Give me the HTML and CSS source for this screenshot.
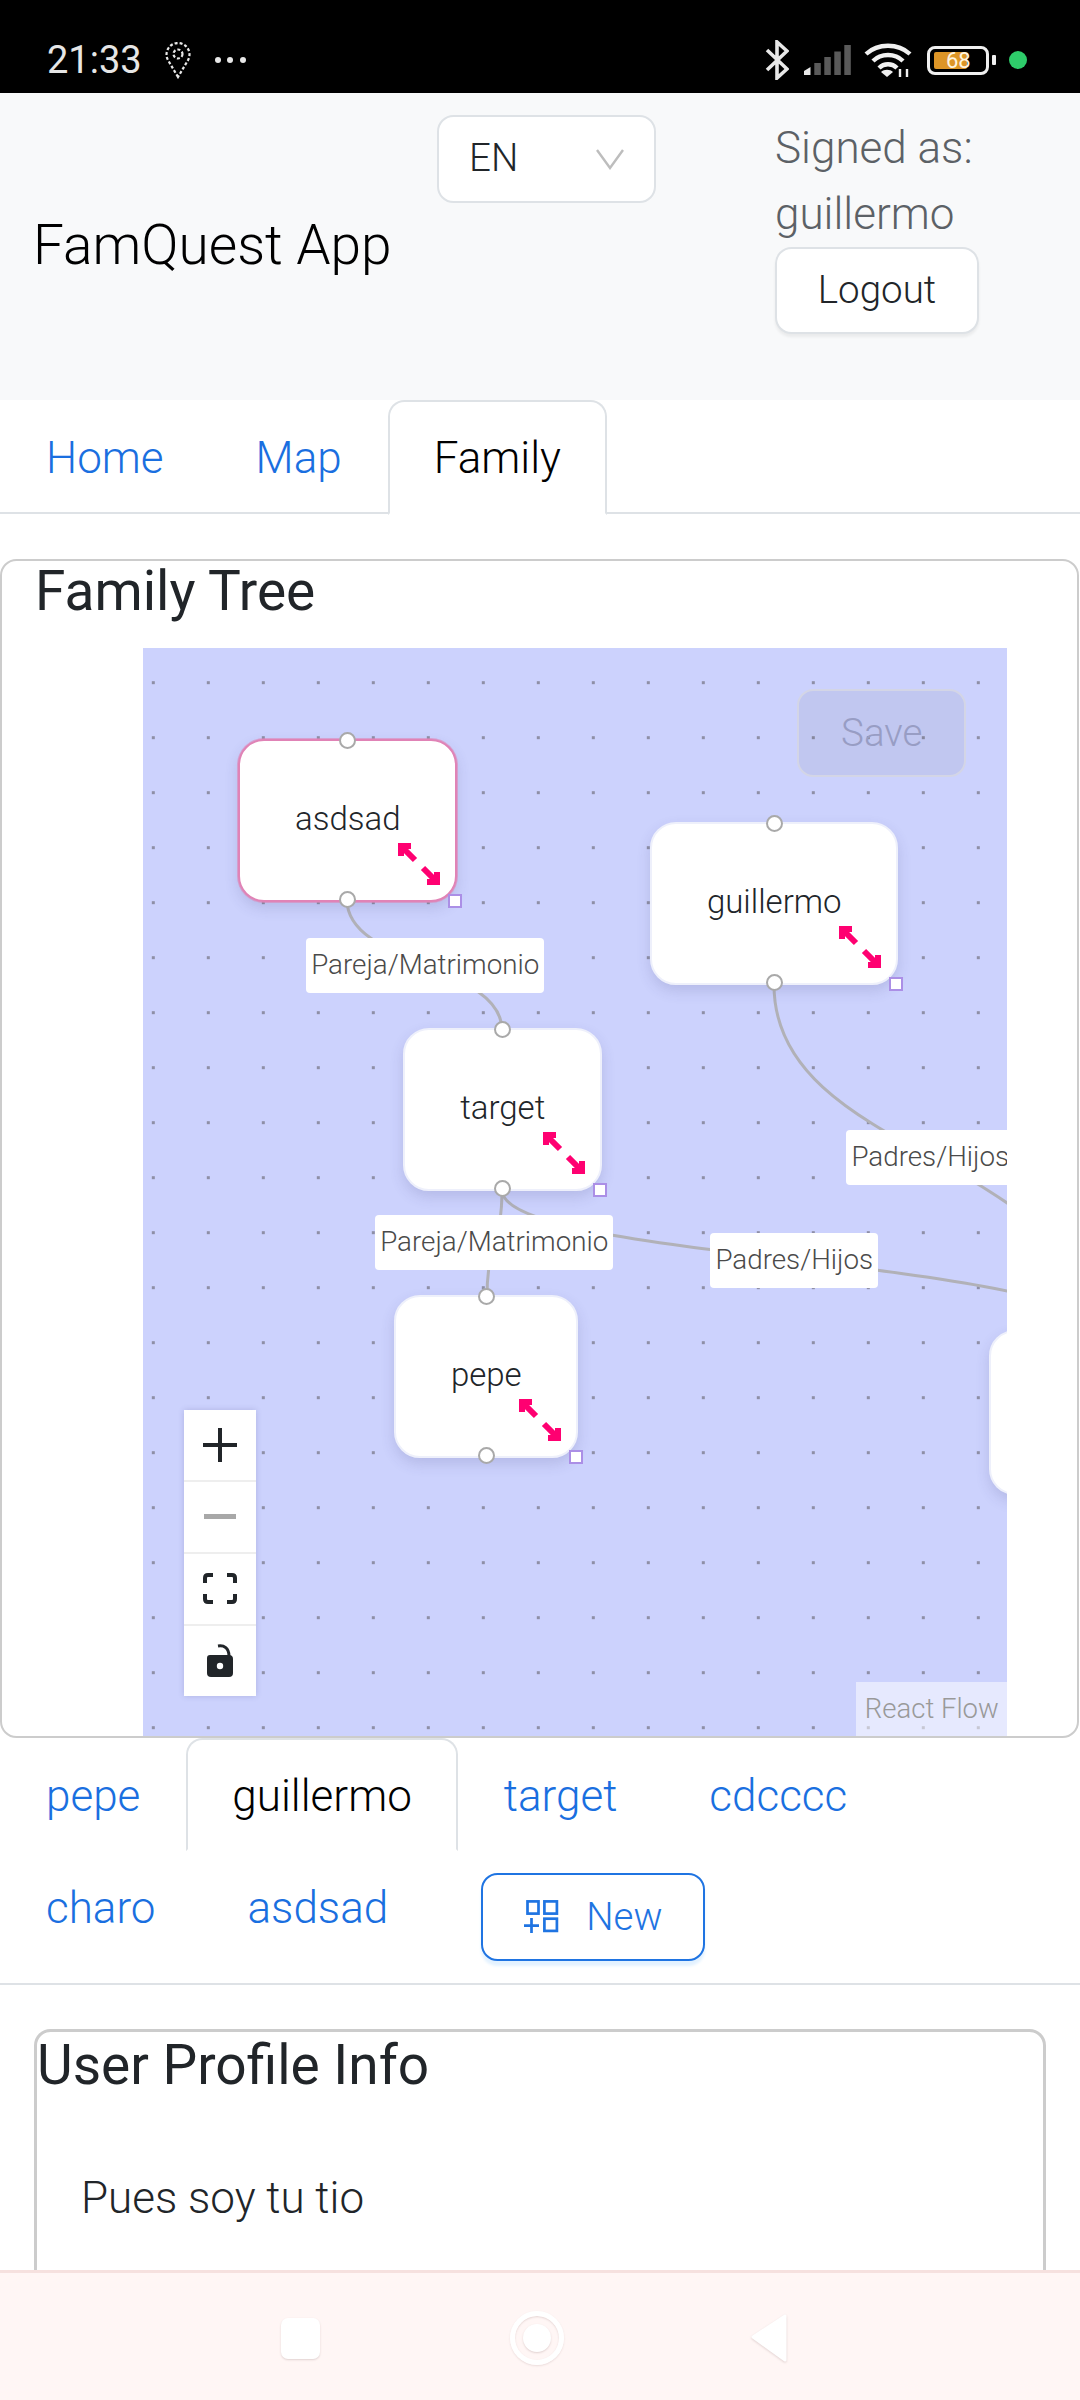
FILE: index.html
```html
<!DOCTYPE html>
<html lang="en">

<head>
     <meta charset="UTF-8">
     <meta name="viewport" content="width=device-width, initial-scale=1.0">
     <title>FamQuest App</title>
     <link rel="stylesheet" href="styles.css">
</head>

<body>
     <div class="screen">

          <div class="statusbar">
               <span class="clock">21:33</span>
               <svg class="pin" width="26" height="37" viewBox="0 0 26 37" fill="none" stroke="#e8e8e8" stroke-width="2.2" stroke-dasharray="3 2">
                    <path d="M13 35 L3.5 19 A11.5 11.5 0 1 1 22.5 19 Z" />
                    <circle cx="13" cy="12" r="4.5" />
               </svg>
               <span class="more">
                    <i></i><i></i><i></i>
               </span>
               <span class="spacer"></span>
               <svg class="bt" width="24" height="40" viewBox="0 0 24 40" fill="none" stroke="#e8e8e8" stroke-width="3.6">
                    <path d="M2 10 L22 29 L12 38 V2 L22 11 L2 30" />
               </svg>
               <svg class="signal" width="47" height="30" viewBox="0 0 47 30" fill="#5a5a5a">
                    <path d="M0 26 L6.5 22 V30 H0 Z" fill="#e8e8e8" />
                    <rect x="10.3" y="18" width="6.5" height="12" />
                    <rect x="20.3" y="12" width="6.5" height="18" />
                    <rect x="30.3" y="6.5" width="6.5" height="23.5" />
                    <rect x="40.3" y="0" width="6.5" height="30" />
               </svg>
               <svg class="wifi" width="48" height="34" viewBox="0 0 48 34" fill="none" stroke="#f0f0f0" stroke-width="4.4">
                    <path d="M2 11 C14 0 34 0 46 11" />
                    <path d="M9 18 C17 10 31 10 39 18" />
                    <path d="M15 25 C20 20 28 20 33 25" />
                    <path d="M17 29 L23 34 L29 29 C26 26 20 26 17 29 Z" fill="#f0f0f0" stroke="none" />
                    <path d="M36 34 V26 M43 34 V26" stroke-width="2.4" />
               </svg>
               <div class="battery">
                    <div class="battery-fill">68</div>
               </div>
               <div class="battery-cap"></div>
               <div class="green-dot"></div>
          </div>

          <div class="topbar">
               <div class="brand">FamQuest App</div>
               <div class="lang">
                    <span>EN</span>
                    <svg width="30" height="22" viewBox="0 0 30 22" fill="none" stroke="#bdbdbd" stroke-width="2.4">
                         <path d="M2 2 L15 20 L28 2" />
                    </svg>
               </div>
               <div class="user">
                    <div class="user-name">Signed as:<br>guillermo</div>
                    <button class="logout">Logout</button>
               </div>
          </div>

          <div class="tabs">
               <a class="tab">Home</a>
               <a class="tab">Map</a>
               <a class="tab active">Family</a>
          </div>

          <div class="card tree-card">
               <h2 class="tree-title">Family Tree</h2>

               <div class="flow">
                    <svg class="edges" width="864" height="1089" viewBox="143 648 864 1089" fill="none" stroke="#b1b1b7" stroke-width="3">
                         <path d="M347 900 C347 965 502 965 502 1030" />
                         <path d="M502 1190 C502 1243 487 1243 487 1297" />
                         <path d="M502 1190 C502 1260 1086 1260 1086 1330" />
                         <path d="M774 985 C774 1157 1086 1157 1086 1329" />
                    </svg>

                    <div class="edge-label label-pareja-1">Pareja/Matrimonio</div>
                    <div class="edge-label label-pareja-2">Pareja/Matrimonio</div>
                    <div class="edge-label label-padres-1">Padres/Hijos</div>
                    <div class="edge-label label-padres-2">Padres/Hijos</div>

                    <div class="node node-asdsad selected">
                         asdsad
                         <span class="handle top"></span>
                         <span class="handle bottom"></span>
                         <span class="resize"></span>
                         <svg class="resize-icon" width="42" height="42" viewBox="0 0 42 42">
                              <path d="M17 17 L3 3 M3 13 V3 H13 M25 25 L39 39 M39 29 V39 H29" />
                         </svg>
                    </div>

                    <div class="node node-guillermo">
                         guillermo
                         <span class="handle top"></span>
                         <span class="handle bottom"></span>
                         <span class="resize"></span>
                         <svg class="resize-icon" width="42" height="42" viewBox="0 0 42 42">
                              <path d="M17 17 L3 3 M3 13 V3 H13 M25 25 L39 39 M39 29 V39 H29" />
                         </svg>
                    </div>

                    <div class="node node-target">
                         target
                         <span class="handle top"></span>
                         <span class="handle bottom"></span>
                         <span class="resize"></span>
                         <svg class="resize-icon" width="42" height="42" viewBox="0 0 42 42">
                              <path d="M17 17 L3 3 M3 13 V3 H13 M25 25 L39 39 M39 29 V39 H29" />
                         </svg>
                    </div>

                    <div class="node node-pepe">
                         pepe
                         <span class="handle top"></span>
                         <span class="handle bottom"></span>
                         <span class="resize"></span>
                         <svg class="resize-icon" width="42" height="42" viewBox="0 0 42 42">
                              <path d="M17 17 L3 3 M3 13 V3 H13 M25 25 L39 39 M39 29 V39 H29" />
                         </svg>
                    </div>

                    <div class="node node-cut"></div>

                    <button class="save">Save</button>

                    <div class="controls">
                         <div class="control">
                              <svg width="34" height="34" viewBox="0 0 34 34" fill="#212529">
                                   <rect x="15" y="0" width="4" height="34" />
                                   <rect x="0" y="15" width="34" height="4" />
                              </svg>
                         </div>
                         <div class="control">
                              <svg width="32" height="5" viewBox="0 0 32 5" fill="#a8a8a8">
                                   <rect width="32" height="5" />
                              </svg>
                         </div>
                         <div class="control">
                              <svg width="34" height="31" viewBox="0 0 34 31" fill="none" stroke="#212529" stroke-width="4">
                                   <path d="M2 10 V5 Q2 2 5 2 H10 M24 2 H29 Q32 2 32 5 V10 M32 21 V26 Q32 29 29 29 H24 M10 29 H5 Q2 29 2 26 V21" />
                              </svg>
                         </div>
                         <div class="control">
                              <svg width="28" height="34" viewBox="0 0 28 34">
                                   <path d="M12 2 C18 1 23 4 23 12" fill="none" stroke="#212529" stroke-width="3" />
                                   <path d="M4 11 H23 Q27 11 27 15 V29 Q27 33 23 33 H5 Q1 33 1 29 V14 Q1 11 4 11 Z" fill="#212529" />
                                   <circle cx="14" cy="22" r="3.2" fill="#fff" />
                              </svg>
                         </div>
                    </div>

                    <div class="attribution">React Flow</div>
               </div>
          </div>

          <div class="tabs member-tabs">
               <a class="tab">pepe</a>
               <a class="tab active">guillermo</a>
               <a class="tab">target</a>
               <a class="tab">cdcccc</a>
               <a class="tab">charo</a>
               <a class="tab">asdsad</a>
               <button class="new-btn">
                    <svg width="35" height="33" viewBox="0 0 35 33" fill="none" stroke="#1f74e2" stroke-width="2.7">
                         <rect x="3.5" y="1.4" width="11" height="12.2" />
                         <rect x="20.4" y="1.4" width="12.5" height="12.2" />
                         <rect x="20.4" y="18.7" width="12.5" height="12.2" />
                         <path d="M0 25.7 H15 M7.5 18 V33" />
                    </svg>
                    New
               </button>
          </div>

          <div class="card profile-card">
               <h2 class="profile-title">User Profile Info</h2>
               <p class="profile-text">Pues soy tu tio</p>
          </div>

          <div class="navbar">
               <div class="nav-square"></div>
               <div class="nav-circle">
                    <div class="nav-dot"></div>
               </div>
               <svg class="nav-back" width="38" height="50" viewBox="0 0 38 50">
                    <path d="M35 3 V47 L3 24 Z" fill="#fff" stroke="#fff" stroke-width="3" stroke-linejoin="round" />
               </svg>
          </div>

     </div>
</body>

</html>
```
FILE: styles.css
```css
* {
     box-sizing: border-box;
}

body {
     margin: 0;
     font-family: Roboto, "Noto Sans", sans-serif;
     font-weight: 300;
     font-size: 44px;
     color: #212529;
     background: #fff;
}

.screen {
     position: relative;
     height: 2400px;
     overflow: hidden;
}

/* status bar */

.statusbar {
     height: 93px;
     background: #000;
     color: #e6e6e6;
     display: flex;
     align-items: center;
     padding: 27px 53px 0 47px;
}

.clock {
     font-size: 38px;
     font-weight: 400;
     width: 118px;
}

.pin {
     margin-right: 24px;
}

.more {
     display: flex;
     gap: 6.4px;
}

.more i {
     width: 6px;
     height: 6px;
     border-radius: 50%;
     background: #e8e8e8;
}

.spacer {
     flex: 1;
}

.bt {
     margin-right: 15px;
}

.signal {
     margin-right: 13px;
}

.wifi {
     margin-right: 15px;
}

.battery {
     width: 62px;
     height: 29px;
     border: 3px solid #f0f0f0;
     border-radius: 8px;
     padding: 3px 4px;
     position: relative;
}

.battery-fill {
     width: 33px;
     height: 17px;
     background: #dd9527;
     color: #fff5e0;
     font-size: 22px;
     line-height: 17px;
     font-weight: 400;
     padding-left: 12px;
     white-space: nowrap;
     border-radius: 2px;
}

.battery-cap {
     width: 4px;
     height: 10px;
     margin-left: 3px;
     background: #f0f0f0;
     border-radius: 1px;
}

.green-dot {
     width: 18px;
     height: 18px;
     margin-left: 13px;
     border-radius: 50%;
     background: #2ecc6a;
}

/* header */

.topbar {
     height: 307px;
     background: #f8f9fa;
     display: flex;
     align-items: center;
     padding-left: 33px;
}

.brand {
     width: 404px;
     font-size: 55px;
     color: #000;
     padding-bottom: 3px;
}

.lang {
     align-self: flex-start;
     margin-top: 22px;
     width: 219px;
     height: 88px;
     background: #fff;
     border: 2.75px solid #dee2e6;
     border-radius: 16.5px;
     display: flex;
     align-items: center;
     justify-content: space-between;
     padding: 0 29px 0 30px;
     font-size: 38.5px;
     color: #212529;
}

.lang span {
     margin-bottom: 4px;
}

.user {
     align-self: flex-start;
     margin-left: 119px;
     margin-top: 22px;
     color: #5c6166;
}

.user-name {
     line-height: 66px;
}

.logout {
     display: block;
     width: 204px;
     height: 87px;
     padding-bottom: 4px;
     background: #fff;
     border: 2.75px solid #dee2e6;
     border-radius: 16.5px;
     box-shadow: 0 3px 3px rgba(0, 0, 0, .06);
     font: inherit;
     font-size: 38.5px;
     color: #212529;
}

/* tabs */

.tabs {
     display: flex;
     flex-wrap: wrap;
     border-bottom: 2.75px solid #dee2e6;
}

.tab {
     height: 115px;
     padding: 0 44px;
     border: 2.75px solid transparent;
     border-radius: 16.5px 16.5px 0 0;
     margin-bottom: -2.75px;
     color: #1a6fe0;
     display: flex;
     align-items: center;
}

.tab.active {
     color: #000;
     background: #fff;
     border-color: #dee2e6 #dee2e6 #fff;
}

/* family tree */

.card {
     background: #fff;
     border: 2.75px solid #ccc;
     border-radius: 16.5px;
}

.tree-card {
     width: 1079px;
     height: 1179px;
     margin-top: 45px;
     overflow: hidden;
}

.tree-title {
     margin: 0 0 0 33px;
     height: 86.25px;
     font-size: 55px;
     font-weight: 400;
     line-height: 60px;
}

.flow {
     position: relative;
     width: 864px;
     height: 1088px;
     margin-left: 141.25px;
     overflow: hidden;
     background-color: #ccd2fd;
     background-image: radial-gradient(circle, #8e8fa6 1.7px, transparent 2px);
     background-size: 55px 55px;
     background-position: -17.2px 7.2px;
}

.edges {
     position: absolute;
     left: 0;
     top: 0;
}

.edge-label {
     position: absolute;
     height: 55px;
     background: #fff;
     border-radius: 4px;
     color: #4a4a4a;
     font-size: 27.75px;
     line-height: 54px;
     text-align: center;
     white-space: nowrap;
}

.label-pareja-1 {
     left: 163px;
     top: 290px;
     width: 238px;
}

.label-pareja-2 {
     left: 232px;
     top: 567px;
     width: 238px;
}

.label-padres-1 {
     left: 567px;
     top: 585px;
     width: 168px;
}

/* runs past the right edge of the canvas, same as the real one */
.label-padres-2 {
     left: 703px;
     top: 482px;
     width: 168px;
}

.node {
     position: absolute;
     height: 163px;
     background: #fff;
     border: 2px solid #eef0fb;
     border-radius: 26px;
     box-shadow: 0 6px 14px rgba(60, 60, 120, .16);
     display: flex;
     align-items: center;
     justify-content: center;
     font-size: 33px;
     padding-bottom: 3px;
}

.node.selected {
     border-color: #e083b6;
     box-shadow: 0 0 0 1px rgba(224, 131, 182, .6), 0 6px 14px rgba(60, 60, 120, .16);
}

.node-asdsad {
     left: 95px;
     top: 91px;
     width: 219px;
}

.node-guillermo {
     left: 507px;
     top: 174px;
     width: 248px;
}

.node-target {
     left: 260px;
     top: 380px;
     width: 199px;
}

.node-pepe {
     left: 251px;
     top: 647px;
     width: 184px;
}

.node-cut {
     left: 846px;
     top: 682px;
     width: 194px;
     height: 165px;
}

.handle {
     position: absolute;
     left: 50%;
     width: 17px;
     height: 17px;
     margin-left: -8.5px;
     background: #fff;
     border: 2px solid #a9a9a9;
     border-radius: 50%;
}

.handle.top {
     top: -8.5px;
}

.handle.bottom {
     bottom: -8.5px;
}

.resize {
     position: absolute;
     right: -7px;
     bottom: -8px;
     width: 14px;
     height: 14px;
     background: #fff;
     border: 2px solid #ab8fe6;
}

.resize-icon {
     position: absolute;
     right: 15px;
     bottom: 15px;
     fill: none;
     stroke: #ff0071;
     stroke-width: 6;
}

.save {
     position: absolute;
     left: 654px;
     top: 41px;
     width: 169px;
     height: 88px;
     background: rgba(0, 0, 0, .05);
     border: 2.75px solid #d3d5e6;
     border-radius: 16.5px;
     font: inherit;
     font-size: 38.5px;
     color: #989dc4;
}

.controls {
     position: absolute;
     left: 41px;
     top: 762px;
     width: 72px;
     box-shadow: 0 0 6px rgba(60, 60, 120, .2);
}

.control {
     height: 72px;
     background: #fff;
     border-bottom: 2px solid #eee;
     display: flex;
     align-items: center;
     justify-content: center;
}

.control:last-child {
     height: 70px;
     border-bottom: 0;
}

.attribution {
     position: absolute;
     right: 0;
     bottom: 0;
     width: 151px;
     height: 54px;
     background: rgba(255, 255, 255, .5);
     color: #999;
     font-size: 27.5px;
     line-height: 54px;
     text-align: center;
}

/* members */

.member-tabs {
     height: 247px;
     align-content: flex-start;
}

.member-tabs .tab {
     height: 113px;
     padding-top: 3px;
}

.member-tabs .tab:nth-child(n+5) {
     height: 115px;
}

.new-btn {
     width: 224px;
     height: 88px;
     margin: 24px 0 0 47px;
     background: #fff;
     border: 2.75px solid #1f74e2;
     border-radius: 16.5px;
     box-shadow: 0 5px 3px #e3f2ff;
     font: inherit;
     font-size: 38.5px;
     color: #1f74e2;
     display: flex;
     align-items: center;
     gap: 27px;
     padding: 0 0 0 41px;
}

/* profile */

.profile-card {
     width: 1012px;
     height: 400px;
     margin: 44px 0 0 34px;
     border-width: 3.5px;
}

.profile-title {
     margin: 0;
     font-size: 55px;
     font-weight: 400;
     line-height: 66px;
}

.profile-text {
     margin: 67px 0 0 44px;
     line-height: 66px;
}

/* android nav */

.navbar {
     position: absolute;
     left: 0;
     right: 0;
     bottom: 0;
     height: 130px;
     background: #fff6f5;
     border-top: 3px solid #f6e1df;
     display: flex;
     align-items: center;
     padding: 3px 0 0 281px;
}

.nav-square {
     width: 39px;
     height: 41px;
     background: #fff;
     border-radius: 7px;
     box-shadow: 0 1px 2px rgba(120, 80, 80, .22);
}

.nav-circle {
     width: 54px;
     height: 54px;
     margin-left: 189.5px;
     border: 5px solid #fff;
     border-radius: 50%;
     box-shadow: 0 1px 2px rgba(120, 80, 80, .16), inset 0 1px 2px rgba(120, 80, 80, .2);
     display: flex;
     align-items: center;
     justify-content: center;
}

.nav-dot {
     width: 28px;
     height: 28px;
     border-radius: 50%;
     background: #fff;
     box-shadow: 0 1px 2px rgba(120, 80, 80, .22);
}

.nav-back {
     margin-left: 186.5px;
     filter: drop-shadow(0 1px 1px rgba(120, 80, 80, .22));
}
```
